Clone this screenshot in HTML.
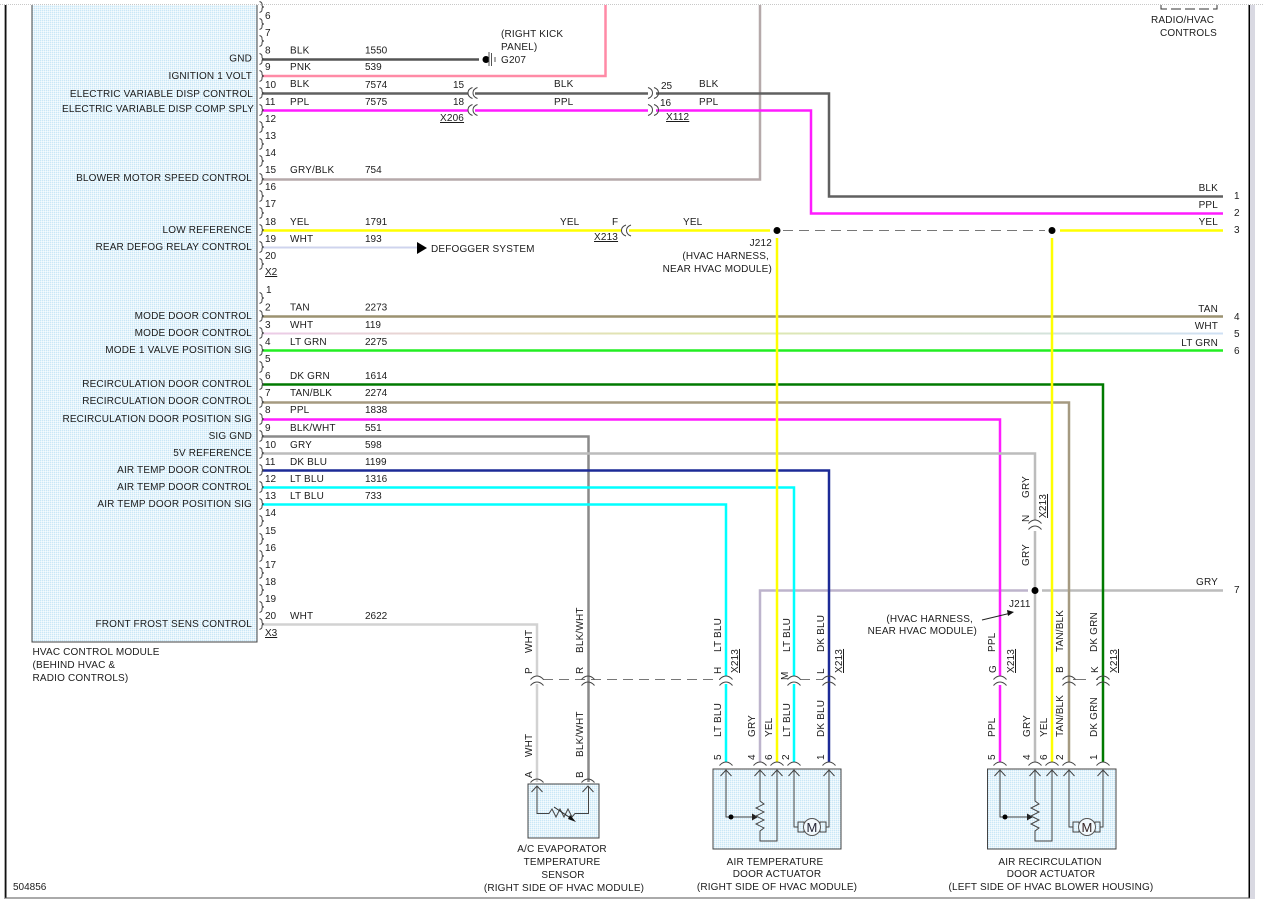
<!DOCTYPE html>
<html><head><meta charset="utf-8"><title>HVAC wiring diagram</title>
<style>
html,body{margin:0;padding:0;background:#fff;overflow:hidden}
svg{display:block}
text{font-family:"Liberation Sans",Arial,sans-serif;font-size:10px;fill:#1c1c1c;letter-spacing:.17px}
.e{text-anchor:end}.m{text-anchor:middle}.u{text-decoration:underline}
.n text,text.n{letter-spacing:0}
.w{fill:none;stroke-width:2.5}
.t{fill:none;stroke:#444;stroke-width:1}
</style></head><body>
<svg width="1264" height="899" viewBox="0 0 1264 899" xmlns="http://www.w3.org/2000/svg">
<defs>
<pattern id="d" width="2" height="2" patternUnits="userSpaceOnUse"><rect width="2" height="2" fill="#e6f4fb"/><rect width="1" height="1" fill="#c9e7f7"/><rect x="1" y="1" width="1" height="1" fill="#f4fbfe"/></pattern>
<linearGradient id="g1" x1="0" x2="1" y1="0" y2="0"><stop offset="0" stop-color="#eccbe8"/><stop offset=".45" stop-color="#dfe8a8"/><stop offset="1" stop-color="#cfe0f4"/></linearGradient>
<path id="p" d="M0,-5.5 Q3,-4.5 2.5,-2 Q2.5,0 4.5,0 Q2.5,0 2.5,2 Q3,4.5 0,5.5" fill="none" stroke="#444"/>
<path id="a" d="M-6.5,2.5 Q-3.5,-1 0,-1 Q3.5,-1 6.5,2.5" fill="none" stroke="#444"/>
<path id="c" d="M-5.5,6 L0,0 L5.5,6" fill="none" stroke="#444"/>
<path id="l" d="M3,-5.5 Q-1.5,-4 -1.5,0 Q-1.5,4 3,5.5" fill="none" stroke="#444"/>
<path id="r" d="M-3,-5.5 Q1.5,-4 1.5,0 Q1.5,4 -3,5.5" fill="none" stroke="#444"/>
</defs>

<rect width="1264" height="899" fill="#fff"/>
<line x1="0" y1="4.5" x2="1264" y2="4.5" stroke="#c8c8c8" stroke-dasharray="1 1"/>
<rect x="4" y="5" width="1" height="894" fill="#aaa"/>
<rect x="5" y="5" width="1.5" height="893" fill="#111"/>
<rect x="1248.5" y="5" width="1.5" height="893" fill="#000"/>
<rect x="1250" y="5" width="5" height="894" fill="#d9d9e2"/>
<rect x="5" y="897.5" width="1245" height="1" fill="#555"/>

<!-- module box -->
<path d="M32,5 V642 H257 V5" fill="url(#d)" stroke="#444" stroke-width="1"/>

<!-- wires -->
<g class="w">
<path d="M262,59.5 H479" stroke="#555"/>
<path d="M262,76 H605.5 V5" stroke="#ff8aa6"/>
<path d="M760,5 V179.5 H262" stroke="#b5a9aa"/>
<path d="M262,93.5 H829 V196.5 H1223" stroke="#606060"/>
<path d="M262,110.5 H811 V213.5 H1223" stroke="#ff1cff"/>
<path d="M262,230.5 H770" stroke="#ffff00"/>
<path d="M1060,230.5 H1223" stroke="#ffff00"/>
<line x1="262" y1="247.5" x2="418" y2="247.5" stroke="#cfd4ee" stroke-width="2"/>
<path d="M262,316.5 H1223" stroke="#9c9270"/>
<rect x="262" y="332.5" width="961" height="2" fill="url(#g1)" stroke="none"/>
<path d="M262,350.5 H1223" stroke="#22ee22"/>
<path d="M1028,590.5 H760 V762" stroke="#bdb4cc"/>
<path d="M1042,590.5 H1223" stroke="#bcbcbc"/>
<path d="M262,384.5 H1103 V762" stroke="#007a00"/>
<path d="M262,402.5 H1069 V762" stroke="#a59a80"/>
<path d="M262,419.5 H1000 V762" stroke="#ff1cff"/>
<path d="M262,436.5 H588.5 V782" stroke="#8a8a8a"/>
<path d="M262,453.5 H1035 V762" stroke="#bcbcbc"/>
<path d="M262,470.5 H829 V762" stroke="#1c2a96"/>
<path d="M262,487.5 H794 V762" stroke="#00ffff"/>
<path d="M262,504.5 H726 V762" stroke="#00ffff"/>
<path d="M262,624.5 H537 V782" stroke="#d2d2d2"/>
<path d="M777,238 V762" stroke="#ffff00"/>
<path d="M1052,238 V762" stroke="#ffff00"/>
</g>

<!-- connector gaps -->
<g fill="#fff">
<rect x="468" y="91" width="7" height="21"/>
<rect x="648" y="91" width="8" height="21"/>
<rect x="621" y="228" width="8" height="5"/>
<rect x="534" y="676" width="6" height="8"/>
<rect x="723" y="676" width="6" height="8"/>
<rect x="791" y="676" width="6" height="8"/>
<rect x="997" y="676" width="6" height="9"/>
<rect x="1032" y="520" width="6" height="11"/>
</g>

<!-- dashed harness lines -->
<g stroke="#777" stroke-width="1" fill="none" stroke-dasharray="10 6">
<line x1="783" y1="230.5" x2="1045" y2="230.5"/>
<line x1="543" y1="679.5" x2="720" y2="679.5"/>
<line x1="800" y1="679.5" x2="823" y2="679.5"/>
</g>
<line x1="1073" y1="679.5" x2="1086" y2="679.5" stroke="#777"/>
<line x1="1096" y1="679.5" x2="1098" y2="679.5" stroke="#777"/>

<!-- splices -->
<circle cx="777" cy="230.5" r="3.5" fill="#000"/>
<circle cx="1052" cy="230.5" r="3.5" fill="#000"/>
<circle cx="1035" cy="590.5" r="3.5" fill="#000"/>

<!-- ground -->
<circle cx="486" cy="59.5" r="3.5" fill="#000"/>
<path d="M489,52 V66 M491.5,53 V66 M495,57 V62" stroke="#555" fill="none"/>

<!-- defogger arrow -->
<path d="M417,242 L427,248 L417,254 Z" fill="#000"/>

<!-- pin brackets -->
<g transform="translate(259.5,0)">
<use href="#p" y="7"/><use href="#p" y="24"/><use href="#p" y="41"/><use href="#p" y="59"/><use href="#p" y="76"/><use href="#p" y="93"/><use href="#p" y="110"/><use href="#p" y="127"/><use href="#p" y="144"/><use href="#p" y="161"/><use href="#p" y="179"/><use href="#p" y="196"/><use href="#p" y="213"/><use href="#p" y="230"/><use href="#p" y="247"/><use href="#p" y="264"/>
<use href="#p" y="298"/><use href="#p" y="316"/><use href="#p" y="333"/><use href="#p" y="350"/><use href="#p" y="367"/><use href="#p" y="384"/><use href="#p" y="402"/><use href="#p" y="419"/><use href="#p" y="436"/><use href="#p" y="453"/><use href="#p" y="470"/><use href="#p" y="487"/><use href="#p" y="504"/><use href="#p" y="521"/><use href="#p" y="539"/><use href="#p" y="556"/><use href="#p" y="573"/><use href="#p" y="590"/><use href="#p" y="607"/><use href="#p" y="624"/>
</g>

<!-- inline connectors -->
<g>
<use href="#l" x="469.5" y="93"/><use href="#l" x="474.5" y="93"/>
<use href="#l" x="469.5" y="110"/><use href="#l" x="474.5" y="110"/>
<use href="#r" x="651" y="93"/><use href="#r" x="657" y="93"/>
<use href="#r" x="651" y="110"/><use href="#r" x="657" y="110"/>
<use href="#l" x="623" y="230.5"/><use href="#l" x="628" y="230.5"/>
</g>
<g>
<use href="#a" x="537" y="677"/><use href="#a" x="537" y="683"/>
<use href="#a" x="588" y="677"/><use href="#a" x="588" y="683"/>
<use href="#a" x="726" y="677"/><use href="#a" x="726" y="683"/>
<use href="#a" x="794" y="677"/><use href="#a" x="794" y="683"/>
<use href="#a" x="829" y="677"/><use href="#a" x="829" y="683"/>
<use href="#a" x="1000" y="677"/><use href="#a" x="1000" y="683"/>
<use href="#a" x="1069" y="677"/><use href="#a" x="1069" y="683"/>
<use href="#a" x="1103" y="677"/><use href="#a" x="1103" y="683"/>
<use href="#a" x="1035" y="521"/><use href="#a" x="1035" y="527"/>
</g>

<!-- sensor box -->
<rect x="528" y="784" width="71" height="54" fill="url(#d)" stroke="#444"/>
<use href="#a" x="537" y="780"/><use href="#a" x="588" y="780"/>
<use href="#c" x="537" y="786"/><use href="#c" x="588" y="786"/>
<path class="t" d="M537,786 V813.5 H549 L552,809 L556,817 L560,809 L564,817 L568,809 L572,817 L575,813.5 H588.5 V786"/>
<path d="M554,807 L572,819" fill="none" stroke="#222"/>
<path d="M570,815 L576,822 L568,819 Z" fill="#111"/>

<!-- air temp box -->
<rect x="713" y="769" width="128" height="80" fill="url(#d)" stroke="#444"/>
<g>
<use href="#a" x="726" y="763"/><use href="#a" x="760" y="763"/><use href="#a" x="777" y="763"/><use href="#a" x="794" y="763"/><use href="#a" x="829" y="763"/>
<use href="#c" x="726" y="770"/><use href="#c" x="760" y="770"/><use href="#c" x="777" y="770"/><use href="#c" x="794" y="770"/><use href="#c" x="829" y="770"/>
</g>
<path class="t" d="M726,770 V817 H754"/>
<circle cx="731" cy="817" r="2.5" fill="#000"/>
<path d="M752,813.5 L758,817 L752,820.5 Z" fill="#222"/>
<path class="t" d="M760,770 V801 L764,804 L756,808 L764,812 L756,816 L764,820 L756,824 L764,828 L760,831 V841 H777 V770"/>
<path class="t" d="M794,770 V827 H798 M829,770 V827 H826"/>
<path class="t" d="M798,822 H804 V832 H798 Z M820,822 H826 V832 H820 Z"/>
<circle cx="812" cy="827" r="8.5" fill="#f2f9fd" stroke="#555"/>
<text class="m" x="812" y="832" style="font-size:13px;fill:#223">M</text>

<!-- recirc box -->
<rect x="987.5" y="769" width="128.5" height="80" fill="url(#d)" stroke="#444"/>
<g>
<use href="#a" x="1000" y="763"/><use href="#a" x="1035" y="763"/><use href="#a" x="1052" y="763"/><use href="#a" x="1069" y="763"/><use href="#a" x="1103" y="763"/>
<use href="#c" x="1000" y="770"/><use href="#c" x="1035" y="770"/><use href="#c" x="1052" y="770"/><use href="#c" x="1069" y="770"/><use href="#c" x="1103" y="770"/>
</g>
<path class="t" d="M1000,770 V817 H1029"/>
<circle cx="1005" cy="817" r="2.5" fill="#000"/>
<path d="M1027,813.5 L1033,817 L1027,820.5 Z" fill="#222"/>
<path class="t" d="M1035,770 V801 L1039,804 L1031,808 L1039,812 L1031,816 L1039,820 L1031,824 L1039,828 L1035,831 V841 H1052 V770"/>
<path class="t" d="M1069,770 V827 H1073 M1103,770 V827 H1100"/>
<path class="t" d="M1073,822 H1079 V832 H1073 Z M1095,822 H1100 V832 H1095 Z"/>
<circle cx="1087" cy="827" r="8.5" fill="#f2f9fd" stroke="#555"/>
<text class="m" x="1087" y="832" style="font-size:13px;fill:#322">M</text>

<!-- J211 arrow -->
<path d="M982,620 L1009,613.5" fill="none" stroke="#222"/>
<path d="M1014,612 L1007,610 L1008,616 Z" fill="#111"/>

<!-- radio box dashed -->
<path d="M1161,5 V9 H1217 V5" fill="none" stroke="#333" stroke-dasharray="10 4"/>

<!-- module signal labels -->
<g>
<text x="252" y="61.5" class="e">GND</text>
<text x="252" y="79" class="e">IGNITION 1 VOLT</text>
<text x="253" y="97" class="e">ELECTRIC VARIABLE DISP CONTROL</text>
<text x="254" y="112" class="e">ELECTRIC VARIABLE DISP COMP SPLY</text>
<text x="252" y="181" class="e">BLOWER MOTOR SPEED CONTROL</text>
<text x="252" y="233" class="e">LOW REFERENCE</text>
<text x="252" y="250" class="e">REAR DEFOG RELAY CONTROL</text>
<text x="252" y="319" class="e">MODE DOOR CONTROL</text>
<text x="252" y="336" class="e">MODE DOOR CONTROL</text>
<text x="252" y="353" class="e">MODE 1 VALVE POSITION SIG</text>
<text x="252" y="387" class="e">RECIRCULATION DOOR CONTROL</text>
<text x="252" y="404" class="e">RECIRCULATION DOOR CONTROL</text>
<text x="252" y="422" class="e">RECIRCULATION DOOR POSITION SIG</text>
<text x="252" y="439" class="e">SIG GND</text>
<text x="252" y="456" class="e">5V REFERENCE</text>
<text x="252" y="473" class="e">AIR TEMP DOOR CONTROL</text>
<text x="252" y="490" class="e">AIR TEMP DOOR CONTROL</text>
<text x="252" y="507" class="e">AIR TEMP DOOR POSITION SIG</text>
<text x="252" y="627" class="e">FRONT FROST SENS CONTROL</text>
</g>

<!-- pin numbers -->
<g class="n">
<text x="265" y="19">6</text><text x="265" y="36">7</text><text x="265" y="53.5">8</text><text x="265" y="70">9</text><text x="265" y="88">10</text><text x="265" y="105">11</text><text x="265" y="122">12</text><text x="265" y="139">13</text><text x="265" y="156">14</text><text x="265" y="173">15</text><text x="265" y="190">16</text><text x="265" y="207">17</text><text x="265" y="225">18</text><text x="265" y="242">19</text><text x="265" y="259">20</text>
<text x="265" y="275" class="u">X2</text>
<text x="266" y="293">1</text><text x="265" y="310.5">2</text><text x="265" y="328">3</text><text x="265" y="345">4</text><text x="265" y="362">5</text><text x="265" y="379">6</text><text x="265" y="396">7</text><text x="265" y="413">8</text><text x="265" y="431">9</text><text x="265" y="448">10</text><text x="265" y="465">11</text><text x="265" y="482">12</text><text x="265" y="499">13</text><text x="265" y="516">14</text><text x="265" y="534">15</text><text x="265" y="551">16</text><text x="265" y="568">17</text><text x="265" y="585">18</text><text x="265" y="602">19</text><text x="265" y="619">20</text>
<text x="265" y="636" class="u">X3</text>
</g>

<!-- wire color + circuit number -->
<g>
<text x="290" y="53.5">BLK</text><text class="n" x="365" y="53.5">1550</text>
<text x="290" y="70">PNK</text><text class="n" x="365" y="70">539</text>
<text x="290" y="87">BLK</text><text class="n" x="365" y="88">7574</text>
<text x="290" y="105">PPL</text><text class="n" x="365" y="105">7575</text>
<text x="290" y="173">GRY/BLK</text><text class="n" x="365" y="173">754</text>
<text x="290" y="225">YEL</text><text class="n" x="365" y="225">1791</text>
<text x="290" y="242">WHT</text><text class="n" x="365" y="242">193</text>
<text x="290" y="310.5">TAN</text><text class="n" x="365" y="310.5">2273</text>
<text x="290" y="328">WHT</text><text class="n" x="365" y="328">119</text>
<text x="290" y="345">LT GRN</text><text class="n" x="365" y="345">2275</text>
<text x="290" y="379">DK GRN</text><text class="n" x="365" y="379">1614</text>
<text x="290" y="396">TAN/BLK</text><text class="n" x="365" y="396">2274</text>
<text x="290" y="413">PPL</text><text class="n" x="365" y="413">1838</text>
<text x="290" y="431">BLK/WHT</text><text class="n" x="365" y="431">551</text>
<text x="290" y="448">GRY</text><text class="n" x="365" y="448">598</text>
<text x="290" y="465">DK BLU</text><text class="n" x="365" y="465">1199</text>
<text x="290" y="482">LT BLU</text><text class="n" x="365" y="482">1316</text>
<text x="290" y="499">LT BLU</text><text class="n" x="365" y="499">733</text>
<text x="290" y="619">WHT</text><text class="n" x="365" y="619">2622</text>
</g>

<!-- mid labels -->
<g>
<text x="501" y="37">(RIGHT KICK</text>
<text x="501" y="50">PANEL)</text>
<text x="501" y="63">G207</text>
<text class="n" x="453" y="88">15</text><text class="n" x="453" y="105">18</text>
<text x="440" y="121" class="u">X206</text>
<text x="554" y="87">BLK</text><text x="554" y="105">PPL</text>
<text class="n" x="661" y="89">25</text><text class="n" x="660" y="106">16</text>
<text x="666" y="120" class="u">X112</text>
<text x="699" y="87">BLK</text><text x="699" y="105">PPL</text>
<text x="560" y="225">YEL</text><text x="612" y="225">F</text>
<text x="594" y="240" class="u">X213</text>
<text x="683" y="225">YEL</text>
<text x="431" y="252">DEFOGGER SYSTEM</text>
<text x="772" y="246" class="e">J212</text>
<text x="769" y="259" class="e">(HVAC HARNESS,</text>
<text x="772" y="272" class="e">NEAR HVAC MODULE)</text>
<text x="1151" y="23">RADIO/HVAC</text>
<text x="1160" y="36">CONTROLS</text>
</g>

<!-- right labels -->
<g>
<text x="1218" y="191" class="e">BLK</text><text x="1218" y="208" class="e">PPL</text><text x="1218" y="225" class="e">YEL</text>
<text x="1218" y="312" class="e">TAN</text><text x="1218" y="329" class="e">WHT</text><text x="1218" y="346" class="e">LT GRN</text>
<text x="1218" y="585" class="e">GRY</text>
<text class="n" x="1234" y="199">1</text><text class="n" x="1234" y="216">2</text><text class="n" x="1234" y="233">3</text>
<text class="n" x="1234" y="320">4</text><text class="n" x="1234" y="337">5</text><text class="n" x="1234" y="354">6</text>
<text class="n" x="1234" y="593">7</text>
<text x="1009" y="607">J211</text>
<text x="973" y="622" class="e">(HVAC HARNESS,</text>
<text x="977" y="634" class="e">NEAR HVAC MODULE)</text>
</g>

<!-- bottom labels -->
<g>
<text x="32.5" y="655">HVAC CONTROL MODULE</text>
<text x="32.5" y="668">(BEHIND HVAC &amp;</text>
<text x="32.5" y="681">RADIO CONTROLS)</text>
<text class="n" x="13" y="890">504856</text>
<text x="562" y="852" class="m">A/C EVAPORATOR</text>
<text x="562" y="865" class="m">TEMPERATURE</text>
<text x="563" y="878" class="m">SENSOR</text>
<text x="564" y="891" class="m">(RIGHT SIDE OF HVAC MODULE)</text>
<text x="775" y="865" class="m">AIR TEMPERATURE</text>
<text x="777" y="877" class="m">DOOR ACTUATOR</text>
<text x="777" y="890" class="m">(RIGHT SIDE OF HVAC MODULE)</text>
<text x="1050" y="865" class="m">AIR RECIRCULATION</text>
<text x="1051" y="877" class="m">DOOR ACTUATOR</text>
<text x="1051" y="890" class="m">(LEFT SIDE OF HVAC BLOWER HOUSING)</text>
</g>

<!-- rotated labels -->
<g>
<text transform="translate(532,653) rotate(-90)">WHT</text>
<text transform="translate(532,674) rotate(-90)">P</text>
<text transform="translate(583,653) rotate(-90)">BLK/WHT</text>
<text transform="translate(583,674) rotate(-90)">R</text>
<text transform="translate(721,652) rotate(-90)">LT BLU</text>
<text transform="translate(721,674) rotate(-90)">H</text>
<text transform="translate(738,673) rotate(-90)" class="u">X213</text>
<text transform="translate(790,652) rotate(-90)">LT BLU</text>
<text transform="translate(788,680) rotate(-90)">M</text>
<text transform="translate(824,652) rotate(-90)">DK BLU</text>
<text transform="translate(824,674) rotate(-90)">L</text>
<text transform="translate(842,673) rotate(-90)" class="u">X213</text>
<text transform="translate(532,757) rotate(-90)">WHT</text>
<text transform="translate(583,757) rotate(-90)">BLK/WHT</text>
<text transform="translate(532,778) rotate(-90)">A</text>
<text transform="translate(583,778) rotate(-90)">B</text>
<text transform="translate(721,737) rotate(-90)">LT BLU</text>
<text transform="translate(755,737) rotate(-90)">GRY</text>
<text transform="translate(772,737) rotate(-90)">YEL</text>
<text transform="translate(790,737) rotate(-90)">LT BLU</text>
<text transform="translate(824,737) rotate(-90)">DK BLU</text>
<text transform="translate(721,760) rotate(-90)">5</text>
<text transform="translate(755,760) rotate(-90)">4</text>
<text transform="translate(772,760) rotate(-90)">6</text>
<text transform="translate(789,760) rotate(-90)">2</text>
<text transform="translate(824,760) rotate(-90)">1</text>
<text transform="translate(995,652) rotate(-90)">PPL</text>
<text transform="translate(996,673) rotate(-90)">G</text>
<text transform="translate(1014,673) rotate(-90)" class="u">X213</text>
<text transform="translate(1063,652) rotate(-90)">TAN/BLK</text>
<text transform="translate(1063,673) rotate(-90)">B</text>
<text transform="translate(1097,652) rotate(-90)">DK GRN</text>
<text transform="translate(1098,673) rotate(-90)">K</text>
<text transform="translate(1117,673) rotate(-90)" class="u">X213</text>
<text transform="translate(995,737) rotate(-90)">PPL</text>
<text transform="translate(1030,737) rotate(-90)">GRY</text>
<text transform="translate(1047,737) rotate(-90)">YEL</text>
<text transform="translate(1063,737) rotate(-90)">TAN/BLK</text>
<text transform="translate(1097,737) rotate(-90)">DK GRN</text>
<text transform="translate(995,760) rotate(-90)">5</text>
<text transform="translate(1030,760) rotate(-90)">4</text>
<text transform="translate(1047,760) rotate(-90)">6</text>
<text transform="translate(1063,760) rotate(-90)">2</text>
<text transform="translate(1097,760) rotate(-90)">1</text>
<text transform="translate(1029,498) rotate(-90)">GRY</text>
<text transform="translate(1046,518) rotate(-90)" class="u">X213</text>
<text transform="translate(1029,522) rotate(-90)">N</text>
<text transform="translate(1029,566) rotate(-90)">GRY</text>
</g>
</svg>
</body></html>
